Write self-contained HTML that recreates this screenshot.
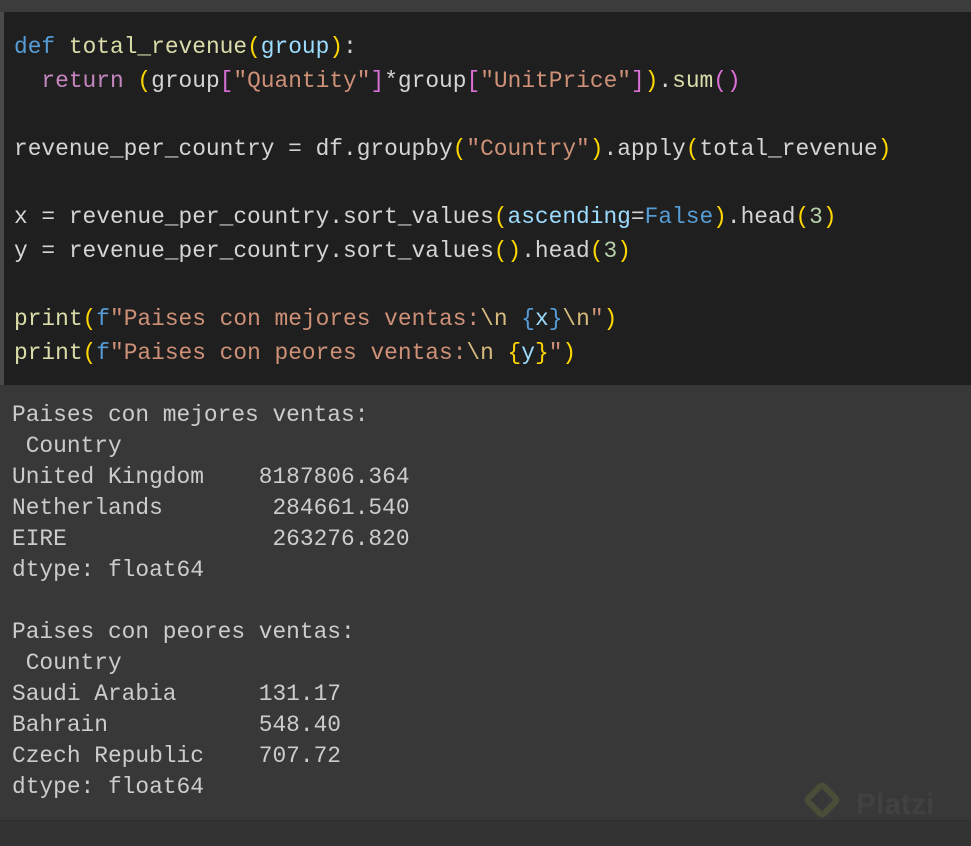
<!DOCTYPE html>
<html><head><style>
body{margin:0;width:971px;height:845px;background:#383838;overflow:hidden;font-family:"Liberation Mono",monospace;}
.top{position:absolute;left:0;top:0;width:971px;height:12px;background:#3c3c3c;}
.code{position:absolute;left:0;top:12px;width:971px;height:373px;background:#1f1f1f;border-left:4px solid #4a4a4a;box-sizing:border-box;}
pre{margin:0;font-family:"Liberation Mono",monospace;font-size:22.85px;white-space:pre;}
.c{position:absolute;left:14px;top:30px;line-height:34px;color:#d4d4d4;}
.o{position:absolute;left:12px;top:400px;line-height:31px;color:#cccccc;}
.k{color:#569cd6}.f{color:#dcdcaa}.p{color:#9cdcfe}.r{color:#c586c0}.y{color:#ffd700}.m{color:#da70d6}.s{color:#ce9178}.n{color:#b5cea8}.e{color:#d7ba7d}
.bot{position:absolute;left:0;top:820px;width:971px;height:25px;background:#333;border-top:1px solid #2e2e2e;}
.wm{position:absolute;left:808px;top:786px;width:28px;height:28px;border:6px solid #4a4d38;border-radius:6px;transform:rotate(45deg);box-sizing:border-box;}
.wt{position:absolute;left:856px;top:788px;font-family:"Liberation Sans",sans-serif;font-size:30px;font-weight:bold;color:#414141;}
</style></head><body>
<div class="top"></div>
<div class="code"></div>
<pre class="c"><span class="k">def</span> <span class="f">total_revenue</span><span class="y">(</span><span class="p">group</span><span class="y">)</span>:
  <span class="r">return</span> <span class="y">(</span>group<span class="m">[</span><span class="s">"Quantity"</span><span class="m">]</span>*group<span class="m">[</span><span class="s">"UnitPrice"</span><span class="m">]</span><span class="y">)</span>.<span class="f">sum</span><span class="m">()</span>

revenue_per_country = df.groupby<span class="y">(</span><span class="s">"Country"</span><span class="y">)</span>.apply<span class="y">(</span>total_revenue<span class="y">)</span>

x = revenue_per_country.sort_values<span class="y">(</span><span class="p">ascending</span>=<span class="k">False</span><span class="y">)</span>.head<span class="y">(</span><span class="n">3</span><span class="y">)</span>
y = revenue_per_country.sort_values<span class="y">()</span>.head<span class="y">(</span><span class="n">3</span><span class="y">)</span>

<span class="f">print</span><span class="y">(</span><span class="k">f</span><span class="s">"Paises con mejores ventas:</span><span class="e">\n</span><span class="s"> </span><span class="k">{</span><span class="p">x</span><span class="k">}</span><span class="e">\n</span><span class="s">"</span><span class="y">)</span>
<span class="f">print</span><span class="y">(</span><span class="k">f</span><span class="s">"Paises con peores ventas:</span><span class="e">\n</span><span class="s"> </span><span class="y">{</span><span class="p">y</span><span class="y">}</span><span class="s">"</span><span class="y">)</span></pre>
<pre class="o">Paises con mejores ventas:
 Country
United Kingdom    8187806.364
Netherlands        284661.540
EIRE               263276.820
dtype: float64

Paises con peores ventas:
 Country
Saudi Arabia      131.17
Bahrain           548.40
Czech Republic    707.72
dtype: float64</pre>
<div class="bot"></div>
<div class="wm"></div>
<div class="wt">Platzi</div>
</body></html>
